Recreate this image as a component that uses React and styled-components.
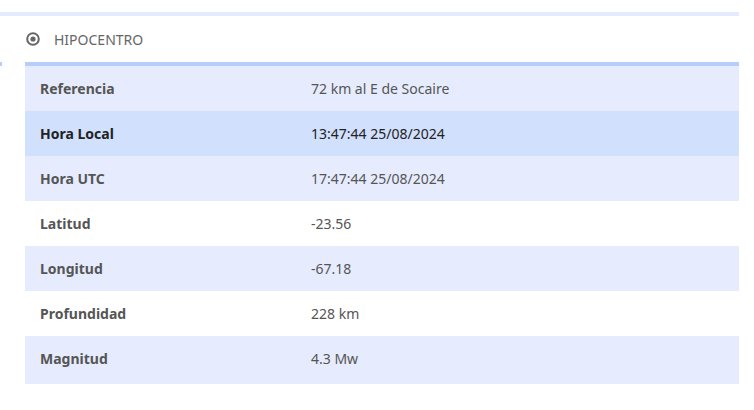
import React from 'react';
import styled, { createGlobalStyle } from 'styled-components';

const GlobalStyle = createGlobalStyle`
	body {
		margin: 0;
		background: #ffffff;
		font-family: "Noto Sans", "Open Sans", sans-serif;
	}
`;

const rows = [
	{ label: 'Referencia', value: '72 km al E de Socaire', tone: 'light' },
	{ label: 'Hora Local', value: '13:47:44 25/08/2024', tone: 'active' },
	{ label: 'Hora UTC', value: '17:47:44 25/08/2024', tone: 'light' },
	{ label: 'Latitud', value: '-23.56', tone: 'white' },
	{ label: 'Longitud', value: '-67.18', tone: 'light' },
	{ label: 'Profundidad', value: '228 km', tone: 'white' },
	{ label: 'Magnitud', value: '4.3 Mw', tone: 'light' },
];

const toneBg = {
	light: '#e6ecfe',
	active: '#d1e0fd',
	white: '#ffffff',
};

function App() {
	return (
		<>
			<GlobalStyle />
			<Page>
				<TopBar />
				<Header>
					<TargetIcon viewBox="0 0 14 14" aria-hidden="true">
						<circle cx="7" cy="7" r="5.8" fill="none" stroke="#666666" strokeWidth="2" />
						<circle cx="7" cy="7" r="2.6" fill="#666666" />
					</TargetIcon>
					<Title>HIPOCENTRO</Title>
				</Header>
				<Section>
					<Stub />
					<Table>
						<tbody>
							{rows.map((r) => (
								<Row key={r.label} $tone={r.tone}>
									<LabelCell $active={r.tone === 'active'}>{r.label}</LabelCell>
									<ValueCell $active={r.tone === 'active'}>{r.value}</ValueCell>
								</Row>
							))}
						</tbody>
					</Table>
				</Section>
			</Page>
		</>
	);
}

const Page = styled.div`
	padding-top: 12px;
	width: 739px;
`;

const TopBar = styled.div`
	height: 4px;
	background: #e4ebfd;
`;

const Header = styled.div`
	display: flex;
	align-items: center;
	height: 46px;
	padding-left: 26px;
	gap: 14px;
`;

const TargetIcon = styled.svg`
	width: 14px;
	height: 14px;
	display: block;
`;

const Title = styled.span`
	font-size: 14px;
	color: #666666;
`;

const Section = styled.div`
	display: flex;
	align-items: flex-start;
`;

const Stub = styled.div`
	width: 2px;
	height: 4px;
	background: #b7cdfb;
`;

const Table = styled.table`
	margin-left: 23px;
	flex: 1;
	border-collapse: separate;
	border-spacing: 0;
	border-top: 4px solid #b7cdfb;
	font-size: 14px;

	tr:last-child td {
		height: 48px;
		padding-bottom: 3px;
	}
`;

const Row = styled.tr`
	background: ${(p) => toneBg[p.$tone]};
`;

const LabelCell = styled.td`
	box-sizing: border-box;
	width: 286px;
	height: 45px;
	padding: 0 0 0 15px;
	font-weight: 700;
	color: ${(p) => (p.$active ? '#222222' : '#555555')};
	vertical-align: middle;
`;

const ValueCell = styled.td`
	box-sizing: border-box;
	height: 45px;
	padding: 0;
	color: ${(p) => (p.$active ? '#222222' : '#555555')};
	vertical-align: middle;
`;

export default App;
